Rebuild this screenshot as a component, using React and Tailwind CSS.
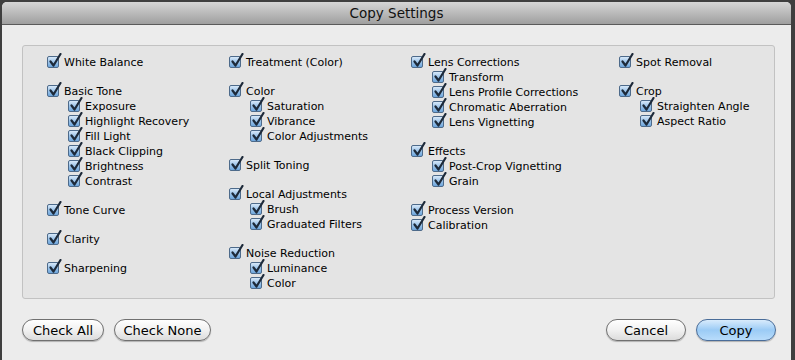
import React from 'react';

const columns = [
    {
        width: 'w-[182px]',
        groups: [
            [{ label: 'White Balance' }],
            [
                { label: 'Basic Tone' },
                { label: 'Exposure', sub: true },
                { label: 'Highlight Recovery', sub: true },
                { label: 'Fill Light', sub: true },
                { label: 'Black Clipping', sub: true },
                { label: 'Brightness', sub: true },
                { label: 'Contrast', sub: true },
            ],
            [{ label: 'Tone Curve' }],
            [{ label: 'Clarity' }],
            [{ label: 'Sharpening' }],
        ],
    },
    {
        width: 'w-[182px]',
        groups: [
            [{ label: 'Treatment (Color)' }],
            [
                { label: 'Color' },
                { label: 'Saturation', sub: true },
                { label: 'Vibrance', sub: true },
                { label: 'Color Adjustments', sub: true },
            ],
            [{ label: 'Split Toning' }],
            [
                { label: 'Local Adjustments' },
                { label: 'Brush', sub: true },
                { label: 'Graduated Filters', sub: true },
            ],
            [
                { label: 'Noise Reduction' },
                { label: 'Luminance', sub: true },
                { label: 'Color', sub: true },
            ],
        ],
    },
    {
        width: 'w-[208px]',
        groups: [
            [
                { label: 'Lens Corrections' },
                { label: 'Transform', sub: true },
                { label: 'Lens Profile Corrections', sub: true },
                { label: 'Chromatic Aberration', sub: true },
                { label: 'Lens Vignetting', sub: true },
            ],
            [
                { label: 'Effects' },
                { label: 'Post-Crop Vignetting', sub: true },
                { label: 'Grain', sub: true },
            ],
            [{ label: 'Process Version' }, { label: 'Calibration' }],
        ],
    },
    {
        width: 'w-[150px]',
        groups: [
            [{ label: 'Spot Removal' }],
            [
                { label: 'Crop' },
                { label: 'Straighten Angle', sub: true },
                { label: 'Aspect Ratio', sub: true },
            ],
        ],
    },
];

const CheckBox = () => (
    <span className="relative inline-block w-[12px] h-[12px] shrink-0 rounded-[2px] border border-[#4d6a8a] bg-gradient-to-b from-[#d7e8f8] via-[#9cc4ea] to-[#6ea6dc]">
        <svg className="absolute -top-[4px] left-[1px]" width="13" height="15" viewBox="0 0 13 15">
            <path d="M1.5 8.5 L4.5 12.5 L11.5 1" fill="none" stroke="#1d2a3a" strokeWidth="2.2" strokeLinecap="round" strokeLinejoin="round" />
        </svg>
    </span>
);

const Row = ({ label, sub }) => (
    <div className={`flex items-center h-[15px] gap-[5px] ${sub ? 'pl-[21px]' : ''}`}>
        <CheckBox />
        <span className="text-[11px] leading-none text-black whitespace-nowrap pt-[1px]">{label}</span>
    </div>
);

const Button = ({ children, className = '', primary }) => (
    <button
        className={`h-[22px] rounded-full border text-[13px] leading-none text-black shadow-[0_1px_1px_rgba(0,0,0,0.25)] ${
            primary
                ? 'border-[#4a6d99] bg-gradient-to-b from-[#d8ebfc] via-[#9bcbf5] to-[#b8dcfb]'
                : 'border-[#707070] bg-gradient-to-b from-[#ffffff] via-[#f1f1f1] to-[#dcdcdc]'
        } ${className}`}
    >
        {children}
    </button>
);

const App = () => {
    return (
        <div className="w-[795px] h-[360px] bg-[#3f3f3f] pt-[2px] pl-[2px] pr-[4px] overflow-hidden" style={{ fontFamily: '"DejaVu Sans", "Liberation Sans", sans-serif' }}>
            <div className="h-full rounded-t-[5px] bg-[#ececec] flex flex-col overflow-hidden">
                <div className="h-[23px] shrink-0 flex items-center justify-center bg-gradient-to-b from-[#d6d6d6] to-[#9f9f9f] border-b border-[#5a5a5a]">
                    <span className="text-[13.5px] text-[#111]">Copy Settings</span>
                </div>

                <div className="mt-[20px] ml-[20px] mr-[16px] h-[254px] rounded-[3px] border border-[#c2c2c2] bg-[#e4e4e4] flex pt-[8px] pl-[24px]">
                    {columns.map((col, ci) => (
                        <div key={ci} className={`${col.width} flex flex-col gap-[14px]`}>
                            {col.groups.map((group, gi) => (
                                <div key={gi} className="flex flex-col">
                                    {group.map((item, ii) => (
                                        <Row key={ii} {...item} />
                                    ))}
                                </div>
                            ))}
                        </div>
                    ))}
                </div>

                <div className="mt-[20px] ml-[20px] mr-[15px] flex items-center">
                    <Button className="w-[82px]">Check All</Button>
                    <Button className="w-[97px] ml-[10px]">Check None</Button>
                    <div className="flex-1" />
                    <Button className="w-[80px]">Cancel</Button>
                    <Button className="w-[80px] ml-[10px]" primary>Copy</Button>
                </div>
            </div>
        </div>
    );
};

export default App;
